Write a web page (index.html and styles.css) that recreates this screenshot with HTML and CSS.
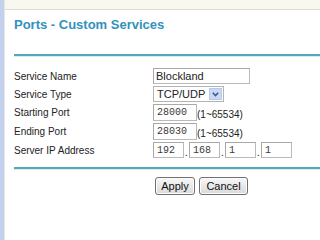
FILE: index.html
```html
<!DOCTYPE html>
<html>
<head>
<meta charset="utf-8">
<link rel="stylesheet" href="styles.css">
</head>
<body>
<div class="side"></div>
<div class="content">
  <div class="topband"></div>
  <div class="panel">
    <h1 class="title">Ports - Custom Services</h1>
    <div class="rule"></div>
    <div class="form">
      <div class="row r1">
        <span class="label">Service Name</span>
        <input class="field name" type="text" value="Blockland">
      </div>
      <div class="row r2">
        <span class="label">Service Type</span>
        <div class="select"><span class="sel-text">TCP/UDP</span><span class="arrow"><svg width="7" height="5" viewBox="0 0 7 5"><path d="M0.8 0.8 L3.5 3.6 L6.2 0.8" fill="none" stroke="#3f5a8c" stroke-width="1.6"/></svg></span></div>
      </div>
      <div class="row r3">
        <span class="label">Starting Port</span>
        <input class="field port" type="text" value="28000"><span class="range">(1~65534)</span>
      </div>
      <div class="row r4">
        <span class="label">Ending Port</span>
        <input class="field port" type="text" value="28030"><span class="range">(1~65534)</span>
      </div>
      <div class="row r5">
        <span class="label">Server IP Address</span>
        <input class="field ip" type="text" value="192"><span class="dot">.</span><input class="field ip" type="text" value="168"><span class="dot">.</span><input class="field ip" type="text" value="1"><span class="dot">.</span><input class="field ip" type="text" value="1">
      </div>
    </div>
    <div class="rule rule2"></div>
    <div class="buttons">
      <button class="btn apply">Apply</button>
      <button class="btn cancel">Cancel</button>
    </div>
  </div>
</div>
</body>
</html>
```
FILE: styles.css
```css
html, body {
  margin: 0;
  padding: 0;
}
body {
  width: 320px;
  height: 240px;
  overflow: hidden;
  display: flex;
  background: #ffffff;
  font-family: "Liberation Sans", Arial, sans-serif;
  color: #222222;
}
.side {
  width: 4px;
  background: #c3d1ef;
  border-right: 1px solid #e6e6e6;
  flex: none;
}
.content {
  flex: 1;
  display: flex;
  flex-direction: column;
}
.topband {
  height: 9px;
  background: #f8f8f1;
  border-bottom: 1px solid #dfdcd2;
}
.panel {
  padding-left: 9px;
}
.title {
  margin: 7px 0 0 0;
  font-size: 13px;
  line-height: 16px;
  font-weight: bold;
  color: #3192bb;
}
.rule {
  height: 2px;
  background: #56a8b6;
  margin-top: 21px;
  border-bottom: 1px solid #d6eef0;
}
.form {
  margin-top: 11px;
  display: flex;
  flex-direction: column;
  gap: 2px;
}
.row {
  display: flex;
  align-items: center;
}
.r1, .r2, .r5 { height: 16px; }
.r3, .r4 { height: 17px; }
.label {
  width: 139px;
  flex: none;
  font-size: 10px;
  color: #222222;
}
.field {
  box-sizing: border-box;
  margin: 0;
  border: 1px solid #b9b9b9;
  border-top-color: #a9a9a9;
  border-left-color: #a9a9a9;
  padding: 0 2px;
  font-family: "Liberation Sans", Arial, sans-serif;
  font-size: 11px;
  color: #222222;
  background: #ffffff;
  outline: none;
}
.name {
  width: 97px;
  height: 16px;
}
.select {
  box-sizing: border-box;
  width: 71px;
  height: 16px;
  border: 1px solid #b4b4b4;
  display: flex;
  align-items: center;
  justify-content: space-between;
  padding: 0 1px 0 3px;
  font-size: 11px;
}
.arrow {
  width: 13px;
  height: 12px;
  background: #c9d9f4;
  border: 1px solid #b6c9ea;
  box-sizing: border-box;
  display: flex;
  align-items: center;
  justify-content: center;
}
.port {
  width: 44px;
  height: 17px;
  font-family: "Liberation Mono", "DejaVu Sans Mono", monospace;
  font-size: 10px;
  padding: 0 3px;
  color: #3a3a3a;
}
.range {
  font-size: 10px;
  margin-top: 4px;
}
.ip {
  width: 31px;
  height: 16px;
  font-family: "Liberation Mono", "DejaVu Sans Mono", monospace;
  font-size: 10px;
  padding: 0 3px;
  color: #3a3a3a;
}
.dot {
  width: 5px;
  text-align: center;
  font-size: 10px;
  align-self: flex-end;
  line-height: 10px;
}
.rule2 {
  margin-top: 9px;
}
.buttons {
  margin-top: 7px;
  padding-left: 141px;
  display: flex;
  gap: 4px;
}
.btn {
  box-sizing: border-box;
  height: 18px;
  margin: 0;
  padding: 0;
  border: 1px solid #707070;
  border-radius: 3px;
  background: linear-gradient(#f7f7f7, #e9e9e9 50%, #d9d9d9);
  box-shadow: inset 0 0 0 1px #fcfcfc;
  font-family: "Liberation Sans", Arial, sans-serif;
  font-size: 11px;
  color: #111111;
}
.apply { width: 40px; }
.cancel { width: 49px; }
```
